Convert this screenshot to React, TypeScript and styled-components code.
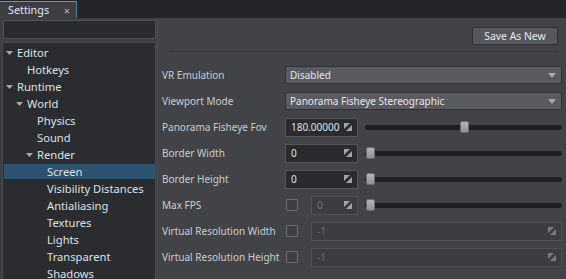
import React from "react";
import styled, { createGlobalStyle } from "styled-components";

const Global = createGlobalStyle`
  html, body { margin: 0; padding: 0; background: #3d3e42; }
  body {
    font-family: "Noto Sans", "DejaVu Sans", sans-serif;
    font-size: 11.2px;
    color: #d6dae0;
  }
  * { box-sizing: border-box; }
`;

const Window = styled.div`
  width: 566px;
  height: 279px;
  display: flex;
  flex-direction: column;
  overflow: hidden;
  background: #3d3e42;
`;

const TabBar = styled.div`
  height: 18px;
  flex: none;
  display: flex;
  align-items: flex-end;
  background: #242528;
`;

const Tab = styled.div`
  width: 77px;
  height: 17px;
  display: flex;
  align-items: center;
  justify-content: space-between;
  padding: 0 6px 0 8px;
  background: #3d3e42;
  border-top: 1px solid #5b97c2;
  border-right: 1px solid #4b7fa3;
  color: #e2e6ec;
  font-size: 10.8px;
  line-height: 1;
`;

const Close = styled.span`
  font-size: 11px;
  color: #b8babd;
`;

const Body = styled.div`
  flex: 1;
  display: flex;
  min-height: 0;
`;

const LeftPane = styled.div`
  width: 157px;
  flex: none;
  display: flex;
  flex-direction: column;
  gap: 3px;
  padding: 2px 1px 0 2px;
`;

const Search = styled.div`
  height: 19px;
  flex: none;
  margin-left: 1px;
  background: #2a2b2e;
  border: 1px solid #515256;
`;

const Tree = styled.div`
  flex: 1;
  display: flex;
  flex-direction: column;
  gap: 2px;
  padding: 2px 0 0 1px;
  background: #2b2c2f;
  border: 1px solid #4a4b4f;
  border-bottom: none;
  border-radius: 2px 2px 0 0;
`;

const TreeRow = styled.div<{ $level: number; $selected?: boolean }>`
  height: 15px;
  flex: none;
  display: flex;
  align-items: center;
  padding-left: ${(p) => 13 + p.$level * 10}px;
  position: relative;
  background: ${(p) => (p.$selected ? "#2c536f" : "transparent")};
  color: #dde2e8;
  white-space: nowrap;
`;

const Caret = styled.svg`
  position: absolute;
  margin-left: -11px;
  width: 7px;
  height: 4px;
`;

const RightPane = styled.div`
  flex: 1;
  display: flex;
  flex-direction: column;
  background: #424347;
  border-left: 1px solid #4c4d51;
  font-size: 10px;
`;

const Header = styled.div`
  display: flex;
  justify-content: flex-end;
  padding: 9px 8px 0 0;
`;

const Button = styled.div`
  width: 86px;
  height: 18px;
  display: flex;
  align-items: center;
  justify-content: center;
  background: #56575c;
  border: 1px solid #2f3033;
  border-radius: 2px;
  color: #e6e9ee;
  font-size: 10.4px;
`;

const Divider = styled.div`
  height: 1px;
  background: #36373a;
  margin: 6px 8px 10px 11px;
`;

const Form = styled.div`
  display: grid;
  grid-template-columns: 123px 1fr;
  grid-auto-rows: 26px;
  padding: 0 4px 0 4px;
`;

const Label = styled.div`
  display: flex;
  align-items: center;
  color: #c9cdd3;
  white-space: nowrap;
`;

const Field = styled.div`
  display: flex;
  align-items: center;
  gap: 7px;
  min-width: 0;
`;

const Select = styled.div`
  flex: 1;
  height: 18px;
  display: flex;
  align-items: center;
  justify-content: space-between;
  padding: 0 5px 0 4px;
  background: #5a5b60;
  border: 1px solid #303134;
  border-radius: 2px;
  color: #e4e7ec;
`;

const Input = styled.div<{ $width?: number; $disabled?: boolean }>`
  ${(p) => (p.$width ? `width: ${p.$width}px; flex: none;` : "flex: 1;")}
  height: 19px;
  display: flex;
  align-items: center;
  justify-content: space-between;
  padding: 0 5px 0 5px;
  background: ${(p) => (p.$disabled ? "#3c3d40" : "#2a2b2e")};
  border: 1px solid ${(p) => (p.$disabled ? "#515256" : "#55565a")};
  color: ${(p) => (p.$disabled ? "#6c6d71" : "#dfe3e9")};
  overflow: hidden;
`;

const Value = styled.span`
  flex: 1;
  overflow: hidden;
  white-space: nowrap;
  margin-right: 4px;
`;

const Check = styled.div`
  width: 12px;
  height: 12px;
  flex: none;
  margin: 0 6px 0 1px;
  border: 1px solid #6d6e72;
  border-radius: 1px;
  background: #3e3f43;
`;

const Slider = styled.div`
  flex: 1;
  height: 12px;
  position: relative;
  display: flex;
  align-items: center;
`;

const Track = styled.div`
  width: 100%;
  height: 5px;
  border-radius: 3px;
  background: #1e1f21;
`;

const Handle = styled.div`
  position: absolute;
  top: 0;
  width: 9px;
  height: 12px;
  border-radius: 2px;
  background: linear-gradient(#b4b5b7, #8f9093);
  border: 1px solid #6e6f72;
`;

const Arrow = () => (
  <svg width="8" height="5" viewBox="0 0 8 5">
    <polygon points="0,0 8,0 4,5" fill="#a9abae" />
  </svg>
);

const DragIcon = ({ dim }: { dim?: boolean }) => (
  <svg width="8" height="8" viewBox="0 0 8 8" style={{ flex: "none" }}>
    <polygon points="0,0 6,0 0,6" fill={dim ? "#7c7d80" : "#a2a3a6"} />
    <polygon points="8,2 8,8 2,8" fill={dim ? "#7c7d80" : "#a2a3a6"} />
  </svg>
);

const tree = [
  { label: "Editor", level: 0, open: true },
  { label: "Hotkeys", level: 1 },
  { label: "Runtime", level: 0, open: true },
  { label: "World", level: 1, open: true },
  { label: "Physics", level: 2 },
  { label: "Sound", level: 2 },
  { label: "Render", level: 2, open: true },
  { label: "Screen", level: 3, selected: true },
  { label: "Visibility Distances", level: 3 },
  { label: "Antialiasing", level: 3 },
  { label: "Textures", level: 3 },
  { label: "Lights", level: 3 },
  { label: "Transparent", level: 3 },
  { label: "Shadows", level: 3 },
];

const SliderBar = ({ frac }: { frac: number }) => (
  <Slider>
    <Track />
    <Handle style={{ left: `calc(${frac} * (100% - 9px) + 1px)` }} />
  </Slider>
);

export default function App() {
  return (
    <>
      <Global />
      <Window>
        <TabBar>
          <Tab>
            <span>Settings</span>
            <Close>×</Close>
          </Tab>
        </TabBar>
        <Body>
          <LeftPane>
            <Search />
            <Tree>
              {tree.map((n) => (
                <TreeRow key={n.label} $level={n.level} $selected={n.selected}>
                  {n.open && (
                    <Caret viewBox="0 0 7 4">
                      <polygon points="0,0 7,0 3.5,4" fill="#a7a9ad" />
                    </Caret>
                  )}
                  {n.label}
                </TreeRow>
              ))}
            </Tree>
          </LeftPane>
          <RightPane>
            <Header>
              <Button>Save As New</Button>
            </Header>
            <Divider />
            <Form>
              <Label>VR Emulation</Label>
              <Field>
                <Select>
                  <span>Disabled</span>
                  <Arrow />
                </Select>
              </Field>

              <Label>Viewport Mode</Label>
              <Field>
                <Select>
                  <span>Panorama Fisheye Stereographic</span>
                  <Arrow />
                </Select>
              </Field>

              <Label>Panorama Fisheye Fov</Label>
              <Field>
                <Input $width={73}>
                  <Value>180.000000</Value>
                  <DragIcon />
                </Input>
                <SliderBar frac={0.5} />
              </Field>

              <Label>Border Width</Label>
              <Field>
                <Input $width={73}>
                  <Value>0</Value>
                  <DragIcon />
                </Input>
                <SliderBar frac={0} />
              </Field>

              <Label>Border Height</Label>
              <Field>
                <Input $width={73}>
                  <Value>0</Value>
                  <DragIcon />
                </Input>
                <SliderBar frac={0} />
              </Field>

              <Label>Max FPS</Label>
              <Field>
                <Check />
                <Input $width={47} $disabled>
                  <Value>0</Value>
                  <DragIcon />
                </Input>
                <SliderBar frac={0} />
              </Field>

              <Label>Virtual Resolution Width</Label>
              <Field>
                <Check />
                <Input $disabled>
                  <Value>-1</Value>
                  <DragIcon dim />
                </Input>
              </Field>

              <Label>Virtual Resolution Height</Label>
              <Field>
                <Check />
                <Input $disabled>
                  <Value>-1</Value>
                  <DragIcon dim />
                </Input>
              </Field>
            </Form>
          </RightPane>
        </Body>
      </Window>
    </>
  );
}
